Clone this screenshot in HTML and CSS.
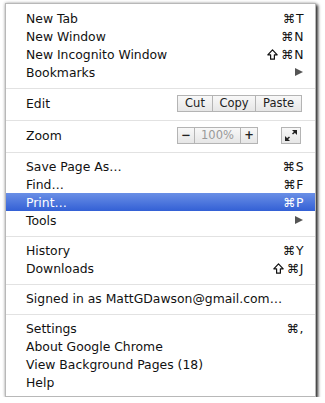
FILE: index.html
```html
<!DOCTYPE html>
<html>

<head>
    <title>Chrome menu</title>
    <link rel="stylesheet" href="styles.css">
</head>

<body>
    <div class="menu">
        <div class="item"><span>New Tab</span><span class="key">⌘T</span></div>
        <div class="item"><span>New Window</span><span class="key">⌘N</span></div>
        <div class="item"><span>New Incognito Window</span><span class="key"><svg class="shift" width="11" height="11" viewBox="0 0 11 11"><path d="M5.5 0.8 L10.2 5.8 L7.4 5.8 L7.4 10.2 L3.6 10.2 L3.6 5.8 L0.8 5.8 Z" fill="none" stroke="#111" stroke-width="1.2" stroke-linejoin="round"/></svg>⌘N</span></div>
        <div class="item"><span>Bookmarks</span><span class="arrow"></span></div>
        <div class="sep"></div>
        <div class="item wide edit">
            <span>Edit</span>
            <div class="group">
                <span class="btn cut">Cut</span>
                <span class="btn copy">Copy</span>
                <span class="btn paste">Paste</span>
            </div>
        </div>
        <div class="sep"></div>
        <div class="item wide zoom">
            <span class="label">Zoom</span>
            <div class="group">
                <span class="btn minus">−</span>
                <span class="btn pct">100%</span>
                <span class="btn plus">+</span>
            </div>
            <span class="btn full">
                <svg width="12" height="11" viewBox="0 0 12 11">
                    <polygon points="12,0 12,5 7,0" fill="#222"/>
                    <line x1="11" y1="1" x2="7.5" y2="4" stroke="#222" stroke-width="1.6"/>
                    <polygon points="0,11 0,6 5,11" fill="#222"/>
                    <line x1="1" y1="10" x2="4.5" y2="7" stroke="#222" stroke-width="1.6"/>
                </svg>
            </span>
        </div>
        <div class="sep"></div>
        <div class="item"><span>Save Page As…</span><span class="key">⌘S</span></div>
        <div class="item"><span>Find…</span><span class="key">⌘F</span></div>
        <div class="item active"><span>Print…</span><span class="key">⌘P</span></div>
        <div class="item"><span>Tools</span><span class="arrow"></span></div>
        <div class="sep"></div>
        <div class="item"><span>History</span><span class="key">⌘Y</span></div>
        <div class="item"><span>Downloads</span><span class="key"><svg class="shift" width="11" height="11" viewBox="0 0 11 11"><path d="M5.5 0.8 L10.2 5.8 L7.4 5.8 L7.4 10.2 L3.6 10.2 L3.6 5.8 L0.8 5.8 Z" fill="none" stroke="#111" stroke-width="1.2" stroke-linejoin="round"/></svg>⌘J</span></div>
        <div class="sep"></div>
        <div class="item"><span>Signed in as MattGDawson@gmail.com…</span></div>
        <div class="sep"></div>
        <div class="item"><span>Settings</span><span class="key">⌘,</span></div>
        <div class="item"><span>About Google Chrome</span></div>
        <div class="item"><span>View Background Pages (18)</span></div>
        <div class="item"><span>Help</span></div>
    </div>
</body>

</html>
```

FILE: styles.css
```css
body {
    margin: 0;
    background: #fff;
    font-family: "DejaVu Sans", sans-serif;
    font-size: 12.4px;
    color: #111;
}

.menu {
    margin: 3px 0 0 5px;
    width: 311px;
    box-sizing: border-box;
    padding: 5px 0 5px 0;
    background: #fff;
    border: 1px solid #b8b8b8;
    box-shadow: 2px 2px 3px rgba(0, 0, 0, 0.8), 0 0 3px rgba(0, 0, 0, 0.3);
}

.item {
    display: flex;
    align-items: center;
    justify-content: space-between;
    height: 18px;
    padding: 0 11px 0 20px;
}

.item .key {
    display: flex;
    align-items: center;
    letter-spacing: 0.5px;
}

.key .shift {
    margin-right: 3px;
}

.item.active {
    background: linear-gradient(#6a8fe6, #3360d5);
    color: #fff;
}

.arrow {
    width: 0;
    height: 0;
    border-top: 4.5px solid transparent;
    border-bottom: 4.5px solid transparent;
    border-left: 8px solid #555;
    margin-right: 1px;
}

.sep {
    height: 1px;
    background: #e2e2e2;
    margin: 7px 0 4px 0;
}

.item.wide {
    height: 20px;
}

.item.edit {
    padding-right: 13px;
}

.item.zoom {
    padding-right: 14px;
}

.item.zoom .label {
    flex: 1;
}

.group {
    display: flex;
}

.btn {
    display: flex;
    align-items: center;
    justify-content: center;
    height: 17px;
    box-sizing: border-box;
    border: 1px solid #b4b4b4;
    background: linear-gradient(#f8f8f8, #e6e6e6);
    font-size: 11.5px;
    color: #222;
}

.group .btn + .btn {
    border-left: none;
}

.cut {
    width: 36px;
}

.copy {
    width: 43px;
}

.paste {
    width: 46px;
}

.minus {
    width: 18px;
    font-weight: bold;
}

.pct {
    width: 46px;
    color: #999;
}

.plus {
    width: 17px;
    font-weight: bold;
}

.full {
    width: 20px;
    margin-left: 23px;
}
```
